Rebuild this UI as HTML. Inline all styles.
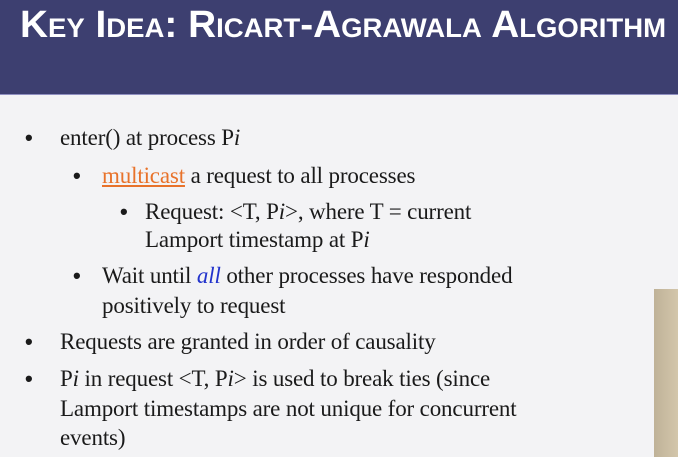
<!DOCTYPE html>
<html><head><style>
body{margin:0;width:678px;height:457px;overflow:hidden;background:#f3f3f5;position:relative;color:#1a1a1a}
.hd{position:absolute;left:0;top:0;width:678px;height:94px;background:#3d3f70;border-bottom:1px solid #8f8fc0}
.t{position:absolute;left:20px;top:4px;color:#fff;font-family:"Liberation Sans",sans-serif;font-weight:bold;font-size:38px;font-variant:small-caps;white-space:nowrap;transform:scaleX(1.02);transform-origin:left top}
.l{position:absolute;font-family:"Liberation Serif","Times New Roman",serif;font-size:23px;letter-spacing:-0.15px;line-height:24px;white-space:nowrap}
.b{position:absolute;font-family:"Liberation Sans",sans-serif;font-size:22px;line-height:24px;font-weight:bold}
.o{color:#e8722a;text-decoration:underline}
.bl{color:#2233cc;font-style:italic}
.ph{position:absolute;left:654px;top:289px;width:24px;height:168px;background:linear-gradient(90deg,#bfb298,#d3c6ab)}
</style></head><body>
<div class="hd"><div class="t">Key Idea: Ricart-Agrawala Algorithm</div></div>
<div class="b" style="left:25px;top:126px">•</div><div class="l" style="left:60px;top:126px">enter() at process P<i>i</i></div>
<div class="b" style="left:73px;top:164px">•</div><div class="l" style="left:102px;top:164px"><span class="o">multicast</span> a request to all processes</div>
<div class="b" style="left:120px;top:200px">•</div><div class="l" style="left:145px;top:200px">Request: &lt;T, P<i>i</i>&gt;, where T = current</div>
<div class="l" style="left:145px;top:228px">Lamport timestamp at P<i>i</i></div>
<div class="b" style="left:73px;top:264px">•</div><div class="l" style="left:102px;top:264px">Wait until <span class="bl">all</span> other processes have responded</div>
<div class="l" style="left:102px;top:294px">positively to request</div>
<div class="b" style="left:25px;top:330px">•</div><div class="l" style="left:60px;top:330px">Requests are granted in order of causality</div>
<div class="b" style="left:25px;top:367px">•</div><div class="l" style="left:60px;top:367px">P<i>i</i> in request &lt;T, P<i>i</i>&gt; is used to break ties (since</div>
<div class="l" style="left:60px;top:397px">Lamport timestamps are not unique for concurrent</div>
<div class="l" style="left:60px;top:426px">events)</div>
<div class="ph"></div>
</body></html>
